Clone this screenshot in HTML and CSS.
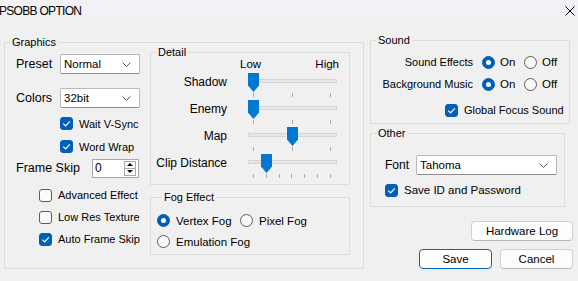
FILE: index.html
```html
<!DOCTYPE html>
<html lang="en">

<head>
    <meta charset="UTF-8">
    <title>PSOBB OPTION</title>
    <link rel="stylesheet" href="styles.css">
</head>

<body>
    <div class="titlebar">
        <span class="title">PSOBB OPTION</span>
        <svg class="close" viewBox="0 0 10 10"><path d="M0.5 0.5L9.5 9.5M9.5 0.5L0.5 9.5"/></svg>
    </div>

    <div class="dialog">
        <!-- graphics group -->
        <fieldset class="group graphics">
            <legend>Graphics</legend>
            <div class="graphics-body">
                <div class="gfx-left">
                    <div class="field-row first">
                        <span class="big-label">Preset</span>
                        <div class="combo small"><span>Normal</span><svg class="chev" viewBox="0 0 9 5"><path d="M0.5 0.5L4.5 4.5L8.5 0.5"/></svg></div>
                    </div>
                    <div class="field-row second">
                        <span class="big-label">Colors</span>
                        <div class="combo small"><span>32bit</span><svg class="chev" viewBox="0 0 9 5"><path d="M0.5 0.5L4.5 4.5L8.5 0.5"/></svg></div>
                    </div>
                    <div class="opt-row indent-wide first-check">
                        <span class="check on"><svg viewBox="0 0 13 13"><path d="M3.3 6.7L5.6 9L9.8 4.4"/></svg></span>
                        <span>Wait V-Sync</span>
                    </div>
                    <div class="opt-row indent-wide">
                        <span class="check on"><svg viewBox="0 0 13 13"><path d="M3.3 6.7L5.6 9L9.8 4.4"/></svg></span>
                        <span>Word Wrap</span>
                    </div>
                    <div class="spin-row">
                        <span class="big-label wide">Frame Skip</span>
                        <div class="spin">
                            <span>0</span>
                            <div class="spin-btns">
                                <span class="spin-up"></span>
                                <span class="spin-down"></span>
                            </div>
                        </div>
                    </div>
                    <div class="opt-row indent first-low">
                        <span class="check"></span>
                        <span>Advanced Effect</span>
                    </div>
                    <div class="opt-row indent">
                        <span class="check"></span>
                        <span>Low Res Texture</span>
                    </div>
                    <div class="opt-row indent">
                        <span class="check on"><svg viewBox="0 0 13 13"><path d="M3.3 6.7L5.6 9L9.8 4.4"/></svg></span>
                        <span>Auto Frame Skip</span>
                    </div>
                </div>

                <div class="gfx-right">
                    <fieldset class="group detail">
                        <legend>Detail</legend>
                        <div class="scale-labels"><span>Low</span><span>High</span></div>

                        <div class="slider-row">
                            <span class="slider-label">Shadow</span>
                            <div class="slider">
                                <div class="track"></div>
                                <div class="ticks"><i></i><i></i><i></i></div>
                                <div class="thumb" style="left: 0px"></div>
                            </div>
                        </div>
                        <div class="slider-row">
                            <span class="slider-label">Enemy</span>
                            <div class="slider">
                                <div class="track"></div>
                                <div class="ticks"><i></i><i></i><i></i></div>
                                <div class="thumb" style="left: 0px"></div>
                            </div>
                        </div>
                        <div class="slider-row">
                            <span class="slider-label">Map</span>
                            <div class="slider">
                                <div class="track"></div>
                                <div class="ticks"><i></i><i></i><i></i></div>
                                <div class="thumb" style="left: 39px"></div>
                            </div>
                        </div>
                        <div class="slider-row">
                            <span class="slider-label">Clip Distance</span>
                            <div class="slider">
                                <div class="track"></div>
                                <div class="ticks"><i></i><i></i><i></i><i></i><i></i><i></i><i></i></div>
                                <div class="thumb" style="left: 13px"></div>
                            </div>
                        </div>
                    </fieldset>

                    <fieldset class="group fog">
                        <legend>Fog Effect</legend>
                        <div class="fog-row first">
                            <span class="fog-opt"><span class="radio on"></span><span>Vertex Fog</span></span>
                            <span class="fog-opt"><span class="radio"></span><span>Pixel Fog</span></span>
                        </div>
                        <div class="fog-row">
                            <span class="fog-opt"><span class="radio"></span><span>Emulation Fog</span></span>
                        </div>
                    </fieldset>
                </div>
            </div>
        </fieldset>

        <div class="side">
            <fieldset class="group sound">
                <legend>Sound</legend>
                <div class="sound-row first">
                    <span class="sound-label">Sound Effects</span>
                    <span class="onoff"><span class="radio on"></span><span>On</span></span>
                    <span class="onoff"><span class="radio"></span><span>Off</span></span>
                </div>
                <div class="sound-row">
                    <span class="sound-label">Background Music</span>
                    <span class="onoff"><span class="radio on"></span><span>On</span></span>
                    <span class="onoff"><span class="radio"></span><span>Off</span></span>
                </div>
                <div class="opt-row focus-row">
                    <span class="check on"><svg viewBox="0 0 13 13"><path d="M3.3 6.7L5.6 9L9.8 4.4"/></svg></span>
                    <span>Global Focus Sound</span>
                </div>
            </fieldset>

            <fieldset class="group other">
                <legend>Other</legend>
                <div class="font-row">
                    <span class="font-label">Font</span>
                    <div class="combo wide"><span>Tahoma</span><svg class="chev" viewBox="0 0 9 5"><path d="M0.5 0.5L4.5 4.5L8.5 0.5"/></svg></div>
                </div>
                <div class="opt-row save-row">
                    <span class="check on"><svg viewBox="0 0 13 13"><path d="M3.3 6.7L5.6 9L9.8 4.4"/></svg></span>
                    <span>Save ID and Password</span>
                </div>
            </fieldset>

            <div class="buttons">
                <button class="btn hw">Hardware Log</button>
                <div class="btn-row">
                    <button class="btn default">Save</button>
                    <button class="btn">Cancel</button>
                </div>
            </div>
        </div>
    </div>
</body>

</html>
```

FILE: styles.css
```css
body {
    margin: 0;
    width: 578px;
    height: 281px;
    overflow: hidden;
    background-color: #f0f0f0;
    font-family: "Liberation Sans", Arial, sans-serif;
    font-size: 11px;
    color: #000;
}

.titlebar {
    height: 22px;
    background-color: #f3f1f6;
    display: flex;
    align-items: center;
    justify-content: space-between;
}

.title {
    margin-left: -1px;
    font-size: 12px;
    letter-spacing: -0.7px;
}

.close {
    width: 10px;
    height: 10px;
    margin-right: 3px;
    margin-top: -1px;
    stroke: #000;
    stroke-width: 1;
    fill: none;
}

.dialog {
    display: flex;
    gap: 6px;
    padding: 12px 0 0 4px;
}

/* group boxes */
.group {
    margin: 0;
    padding: 0;
    border: 1px solid #dcdcdc;
    min-width: 0;
    box-sizing: border-box;
}

.group legend {
    margin-left: 5px;
    padding: 0 2px;
    line-height: 12px;
    font-size: 11px;
}

.graphics {
    width: 360px;
    height: 233px;
    margin-top: 2px;
}

.graphics-body {
    display: flex;
    margin-top: -2px;
}

.gfx-left {
    width: 145px;
}

.gfx-right {
    width: 200px;
}

.big-label {
    font-size: 12.5px;
    width: 44px;
    padding-left: 11px;
}

.big-label.wide {
    width: 76px;
}

.field-row {
    display: flex;
    align-items: center;
    height: 20px;
}

.field-row.first {
    margin-top: 8px;
}

.field-row.second {
    margin-top: 14px;
}

.combo {
    height: 20px;
    box-sizing: border-box;
    background-color: #fff;
    border: 1px solid #b9b9b9;
    border-bottom-color: #8c8c8c;
    border-radius: 2px;
    display: flex;
    align-items: center;
    justify-content: space-between;
    padding: 0 8px 0 3px;
    font-size: 11.5px;
}

.combo.small {
    width: 80px;
}

.combo.wide {
    width: 141px;
}

.chev {
    width: 9px;
    height: 5px;
    stroke: #5a5a5a;
    stroke-width: 1;
    fill: none;
}

/* checkbox and radio rows */
.opt-row {
    display: flex;
    align-items: center;
    gap: 6px;
    height: 23px;
}

.indent-wide {
    padding-left: 55px;
}

.first-check {
    margin-top: 4px;
}

.indent {
    padding-left: 34px;
    height: 22px;
}

.first-low {
    margin-top: 7px;
}

.check {
    width: 13px;
    height: 13px;
    box-sizing: border-box;
    border: 1px solid #5c5c5c;
    border-radius: 3px;
    background-color: #fbfbfb;
    flex: none;
}

.check.on {
    border-color: #005fb8;
    background-color: #005fb8;
}

.check svg {
    display: block;
    width: 13px;
    height: 13px;
    margin: -1px;
    stroke: #fff;
    stroke-width: 1.2;
    fill: none;
}

.radio {
    width: 13px;
    height: 13px;
    box-sizing: border-box;
    border: 1px solid #5c5c5c;
    border-radius: 50%;
    background-color: #f9f9f9;
    flex: none;
    display: flex;
    align-items: center;
    justify-content: center;
}

.radio.on {
    border-color: #005fb8;
    background-color: #005fb8;
}

.radio.on::after {
    content: "";
    width: 5px;
    height: 5px;
    border-radius: 50%;
    background-color: #fff;
}

/* frame skip spinner */
.spin-row {
    display: flex;
    align-items: center;
    margin-top: 1px;
    height: 18px;
}

.spin {
    width: 47px;
    height: 19px;
    box-sizing: border-box;
    background-color: #fff;
    border: 1px solid #a8a8a8;
    display: flex;
    align-items: center;
    justify-content: space-between;
    padding: 0 2px 0 2px;
    font-size: 12px;
}

.spin-btns {
    width: 12px;
    height: 15px;
    box-sizing: border-box;
    border: 1px solid #a8a8a8;
    display: flex;
    flex-direction: column;
}

.spin-btns span {
    flex: 1;
    display: flex;
    align-items: center;
    justify-content: center;
}

.spin-up {
    border-bottom: 1px solid #a8a8a8;
}

.spin-up::after {
    content: "";
    border-left: 3px solid transparent;
    border-right: 3px solid transparent;
    border-bottom: 3px solid #000;
}

.spin-down::after {
    content: "";
    border-left: 3px solid transparent;
    border-right: 3px solid transparent;
    border-top: 3px solid #000;
}

/* detail sliders */
.detail {
    width: 200px;
    padding-bottom: 3px;
}

.scale-labels {
    display: flex;
    justify-content: space-between;
    margin-left: 89px;
    width: 99px;
    height: 12px;
    line-height: 12px;
    font-size: 11.5px;
}

.slider-row {
    display: flex;
    height: 27px;
}

.scale-labels + .slider-row {
    margin-top: 3px;
}

.slider-label {
    width: 76px;
    padding-right: 1px;
    text-align: right;
    line-height: 19px;
    font-size: 12px;
}

.slider {
    position: relative;
    width: 89px;
    margin-left: 20px;
}

.track {
    margin-top: 6px;
    height: 4px;
    box-sizing: border-box;
    background-color: #e7e7e7;
    border: 1px solid #d6d6d6;
}

.ticks {
    display: flex;
    justify-content: space-between;
    margin: 10px 6px 0 5px;
}

.ticks i {
    width: 1px;
    height: 4px;
    background-color: #a9a9a9;
}

.thumb {
    position: absolute;
    top: 0;
    width: 11px;
    height: 19px;
    background-color: #0078d4;
    clip-path: polygon(0 0, 100% 0, 100% 66%, 50% 100%, 0 66%);
}

/* fog effect */
.fog {
    width: 200px;
    margin-top: 6px;
    padding: 0 0 2px 6px;
}

.fog-row {
    display: flex;
    height: 21px;
    align-items: center;
}

.fog-row.first {
    margin-top: 7px;
}

.fog-opt {
    display: flex;
    align-items: center;
    gap: 6px;
    width: 83px;
    font-size: 11.5px;
    white-space: nowrap;
}

/* right side */
.side {
    width: 203px;
}

.sound {
    width: 200px;
    padding: 5px 0 2px 0;
}

.sound-row {
    display: flex;
    align-items: center;
    height: 22px;
}

.sound-label {
    width: 102px;
    padding-right: 1px;
    text-align: right;
    font-size: 11px;
    white-space: nowrap;
}

.onoff {
    display: flex;
    align-items: center;
    gap: 5px;
    width: 42px;
    font-size: 11.5px;
}

.sound-label + .onoff {
    margin-left: 8px;
}

.focus-row {
    margin-top: 4px;
    height: 22px;
    padding-left: 74px;
    font-size: 11px;
}

.other {
    width: 195px;
    margin-top: 3px;
    padding-bottom: 5px;
}

.font-row {
    display: flex;
    align-items: center;
    margin-top: 16px;
}

.font-label {
    width: 31px;
    padding-left: 14px;
    font-size: 12px;
}

.save-row {
    margin-top: 4px;
    height: 22px;
    padding-left: 14px;
    font-size: 11.5px;
}

.buttons {
    display: flex;
    flex-direction: column;
    align-items: flex-end;
    margin-top: 14px;
}

.btn-row {
    display: flex;
    gap: 8px;
    margin-top: 8px;
}

.btn {
    width: 73px;
    height: 20px;
    padding: 0;
    background-color: #fdfdfd;
    border: 1px solid #d0d0d0;
    border-bottom-color: #b8b8b8;
    border-radius: 4px;
    font-family: "Liberation Sans", Arial, sans-serif;
    font-size: 11.5px;
    color: #000;
}

.btn.hw {
    width: 102px;
}

.btn.default {
    border-color: #0067c0;
}
```
